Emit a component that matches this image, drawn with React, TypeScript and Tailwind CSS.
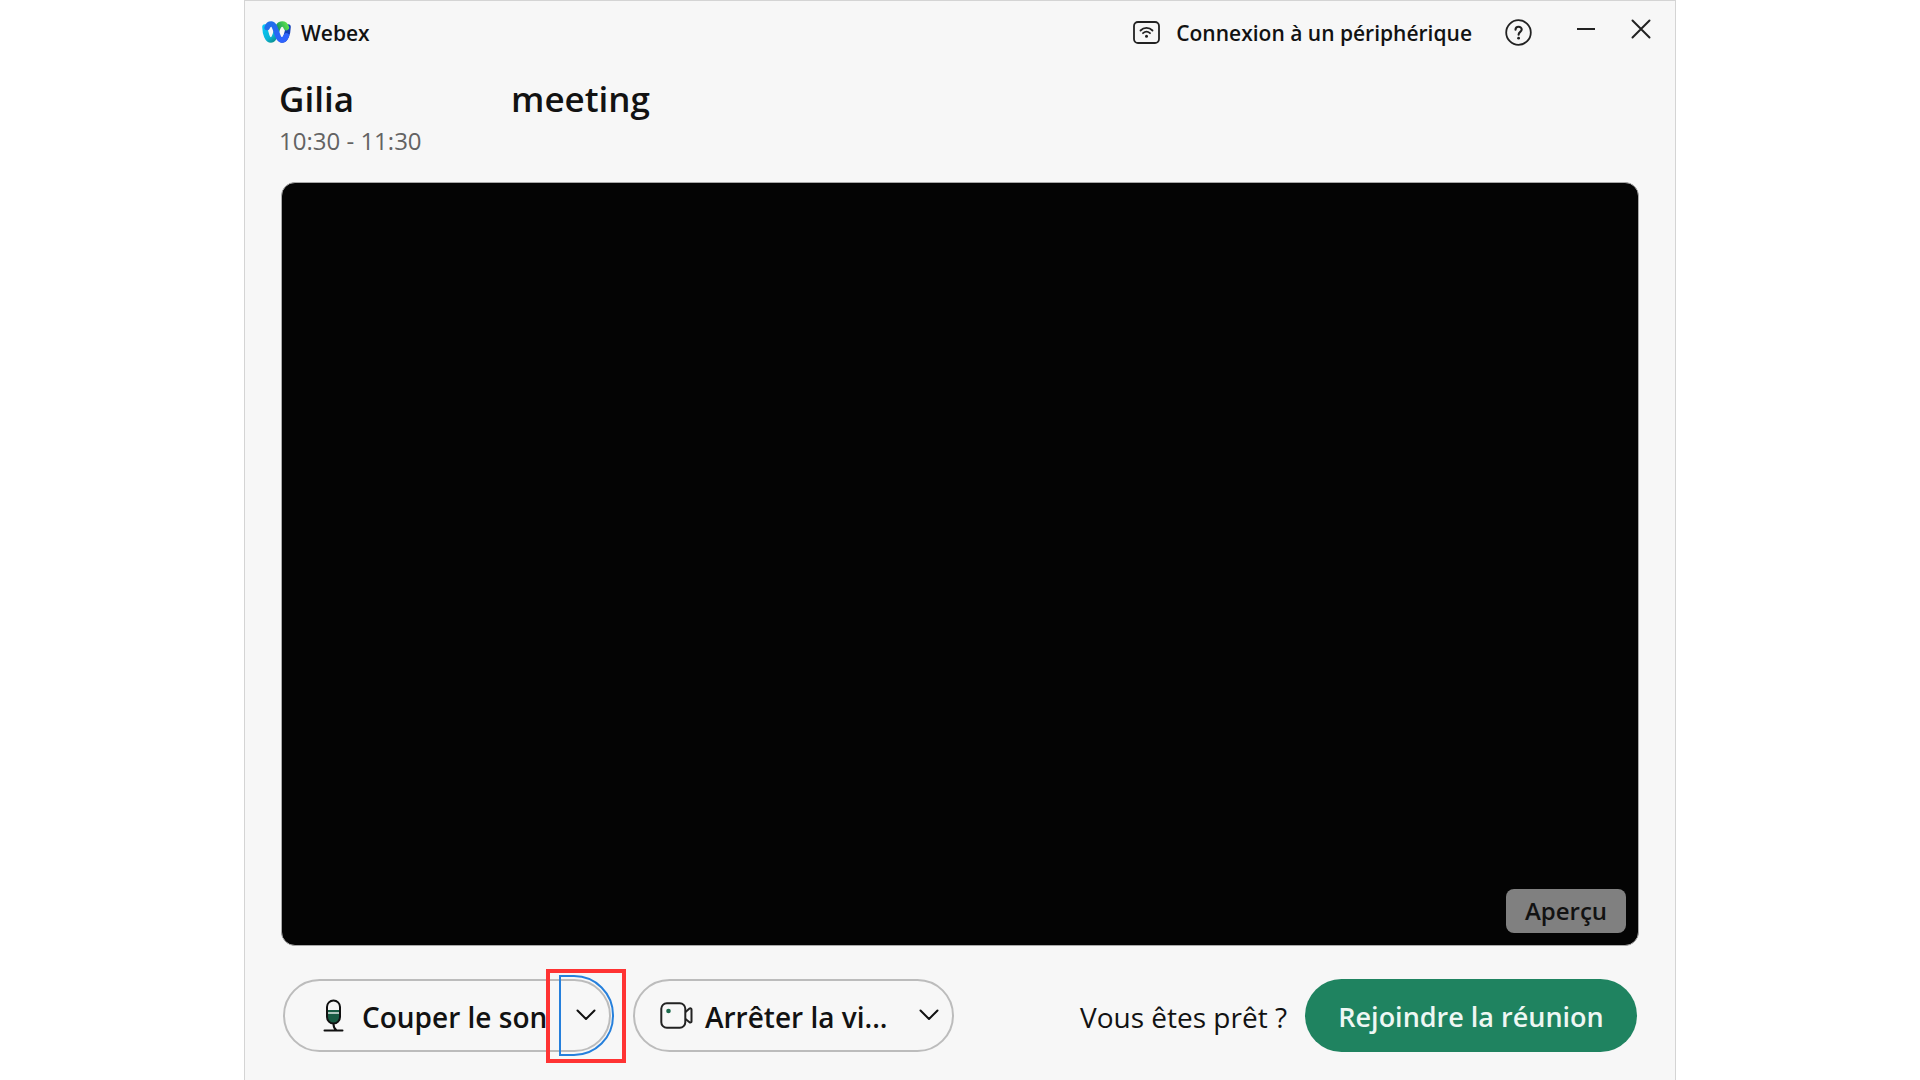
import type { ReactNode } from 'react'

function WebexLogo() {
  return (
    <svg width="29" height="22" viewBox="0 0 29 22" fill="none" strokeLinecap="round" strokeWidth="5.6" aria-hidden="true">
      <defs>
        <linearGradient id="cyan" x1="0" y1="0" x2="15" y2="20" gradientUnits="userSpaceOnUse">
          <stop offset="0.2" stopColor="#08c8f6" />
          <stop offset="0.7" stopColor="#0bb5d8" />
          <stop offset="1" stopColor="#0a8a80" />
        </linearGradient>
        <linearGradient id="green" x1="15" y1="10" x2="26" y2="5" gradientUnits="userSpaceOnUse">
          <stop offset="0" stopColor="#0a8f62" />
          <stop offset="1" stopColor="#5ce04e" />
        </linearGradient>
        <linearGradient id="blue" x1="5" y1="3" x2="20" y2="20" gradientUnits="userSpaceOnUse">
          <stop offset="0" stopColor="#1f6fe8" />
          <stop offset="1" stopColor="#2f63ff" />
        </linearGradient>
      </defs>
      <path d="M26 6C25.800 13 23.500 19 20 19" stroke="#123fb8" />
      <path d="M3 6C3.200 13 5.500 19 9 19C11.500 19 13 15 14 12" stroke="url(#cyan)" />
      <path d="M14.500 10.500C15.800 6 17 3 20.300 3C22.500 3 23.600 4.500 24.300 6.500" stroke="url(#green)" />
      <path d="M5.200 6.500C5.900 4.300 7 3 9.200 3C14.500 3 14.300 19 20 19C22 19 23.500 17 24.400 14.800" stroke="url(#blue)" />
    </svg>
  )
}

function DeviceIcon() {
  return (
    <svg width="27" height="23" viewBox="0 0 27 23" fill="none" stroke="#222" strokeWidth="1.8" strokeLinecap="round" aria-hidden="true">
      <rect x="1" y="1" width="25" height="21" rx="4" />
      <path d="M7.500 9.500C11 6 16 6 19.500 9.500M10 12.200C12.200 10.200 14.800 10.200 17 12.200" />
      <circle cx="13.500" cy="15.200" r="1.500" fill="#222" stroke="none" />
    </svg>
  )
}

function HelpIcon() {
  return (
    <svg width="27" height="27" viewBox="0 0 27 27" fill="none" stroke="#222" strokeWidth="1.8" strokeLinecap="round" aria-hidden="true">
      <circle cx="13.500" cy="13.500" r="12.300" />
      <path d="M10.500 10.800C10.500 6.800 16.700 6.800 16.700 10.600C16.700 13 13.600 12.900 13.600 15.700" strokeWidth="2.100" />
      <circle cx="13.600" cy="19.200" r="1.400" fill="#222" stroke="none" />
    </svg>
  )
}

function MicIcon() {
  return (
    <svg width="21" height="33" viewBox="0 0 21 33" fill="none" stroke="#111" strokeWidth="2" strokeLinecap="round" aria-hidden="true">
      <path d="M4 11H17V18.500A6.500 6.500 0 0 1 4 18.500Z" fill="#185b43" stroke="none" />
      <path d="M4 14H17" stroke="#dfe9e4" strokeWidth="1.500" strokeLinecap="butt" />
      <rect x="4" y="1.500" width="13" height="23" rx="6.500" />
      <path d="M10.500 25C10.500 28 11.500 30 13.500 31.300M1.500 31.500H19.500" />
    </svg>
  )
}

function CameraIcon() {
  return (
    <svg width="33" height="27" viewBox="0 0 33 27" fill="none" stroke="#222" strokeWidth="2" strokeLinejoin="round" aria-hidden="true">
      <rect x="1.300" y="1.300" width="24" height="24.400" rx="5.500" />
      <path d="M25.500 10L29.500 6.600C30.300 6 31.500 6.400 31.500 7.400V19.400C31.500 20.400 30.300 20.800 29.500 20.200L25.500 17" />
      <circle cx="8.500" cy="9" r="2.300" fill="#1b6a4c" stroke="none" />
    </svg>
  )
}

function Chevron() {
  return (
    <svg width="20" height="12" viewBox="0 0 20 12" fill="none" stroke="#111" strokeWidth="2" strokeLinecap="round" strokeLinejoin="round" aria-hidden="true">
      <path d="M1.500 1.500L10 10L18.500 1.500" />
    </svg>
  )
}

interface PillProps {
  icon: ReactNode;
  label: string;
  menuLabel: string;
  className: string;
  highlighted?: boolean;
}

function SplitPill({ icon, label, menuLabel, className, highlighted }: PillProps) {
  return (
    <div className={`relative flex h-[73px] items-stretch rounded-full border-2 border-[#bcbcbc] ${className}`}>
      <button className="flex flex-1 items-center whitespace-nowrap text-[28px] leading-9 font-semibold">
        {icon}
        <span className="pt-1">{label}</span>
      </button>
      <button aria-label={menuLabel} className="flex w-[46px] items-center justify-center">
        <Chevron />
      </button>
      {highlighted && (
        <>
          {/* focus ring and callout box over the arrow */}
          <span className="pointer-events-none absolute -top-1.5 -right-[5px] h-[81px] w-[55px] rounded-r-[40px] border-2 border-[#2680dc]" />
          <span className="pointer-events-none absolute -top-3 -right-[17px] h-[94px] w-20 border-4 border-[#ff3333]" />
        </>
      )}
    </div>
  )
}

export default function App() {
  return (
    <div className="min-h-screen bg-white font-['Open_Sans','Noto_Sans',sans-serif] text-[#121212]">
      <div className="mx-auto flex min-h-screen w-full max-w-[1432px] flex-col border-x border-t border-[#d4d4d4] bg-[#f7f7f7]">
        <header className="flex h-[62px] items-center pr-6 pl-[17px]">
          <WebexLogo />
          <span className="ml-2.5 pt-0.5 text-[21px] leading-8 font-semibold">Webex</span>
          <button className="ml-auto flex items-center gap-4 text-[21px] leading-8 font-semibold">
            <DeviceIcon />
            <span className="pt-0.5">Connexion à un périphérique</span>
          </button>
          <button aria-label="Aide" className="ml-[33px]">
            <HelpIcon />
          </button>
          <button aria-label="Réduire" className="ml-11 pb-1.5">
            <svg width="20" height="20" viewBox="0 0 20 20" stroke="#222" strokeWidth="2">
              <path d="M1 10H19" />
            </svg>
          </button>
          <button aria-label="Fermer" className="ml-[35px] pb-1.5">
            <svg width="20" height="20" viewBox="0 0 20 20" stroke="#222" strokeWidth="2" strokeLinecap="round">
              <path d="M1.500 1.500L18.500 18.500M18.500 1.500L1.500 18.500" />
            </svg>
          </button>
        </header>

        <main className="flex flex-col px-[34px]">
          <h1 className="mt-3.5 flex gap-[157px] text-[35px] leading-11 font-semibold">
            <span>Gilia</span>
            <span>meeting</span>
          </h1>
          <p className="mt-1 text-[24px] leading-8 text-[#636363]">10:30 - 11:30</p>

          {/* Video preview */}
          <div className="mx-0.5 mt-[25px] flex aspect-video items-end justify-end rounded-[14px] border border-[#a8a8a8] bg-[#040404] p-3">
            <span className="w-[120px] rounded-lg bg-[#808080] py-1 text-center text-[24px] leading-9 font-semibold">Aperçu</span>
          </div>

          <div className="mx-1 mt-[33px] flex items-center pb-7">
            <SplitPill
              icon={<span className="mr-[18px] ml-[38px]"><MicIcon /></span>}
              label="Couper le son"
              menuLabel="Options audio"
              className="w-[328px]"
              highlighted
            />
            <SplitPill
              icon={<span className="mr-3 ml-[25px]"><CameraIcon /></span>}
              label="Arrêter la vi..."
              menuLabel="Options vidéo"
              className="ml-[22px] w-[321px]"
            />
            <p className="mr-[18px] ml-auto pt-1 text-[28px] leading-9">Vous êtes prêt ?</p>
            <button className="h-[73px] w-[332px] rounded-full bg-[#1f8360] pt-1 text-[27px] leading-9 font-semibold text-[#eef7f3]">
              Rejoindre la réunion
            </button>
          </div>
        </main>
      </div>
    </div>
  )
}
